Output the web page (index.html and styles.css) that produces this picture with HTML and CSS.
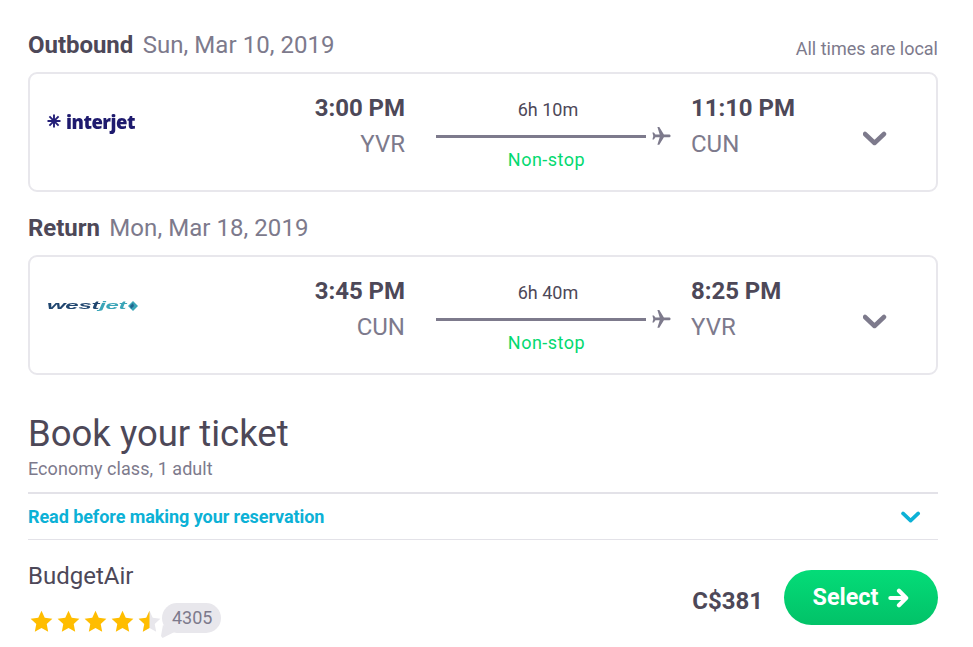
FILE: index.html
```html
<!DOCTYPE html>
<html lang="en">
<head>
<meta charset="utf-8">
<title>Book your ticket</title>
<link rel="stylesheet" href="styles.css">
</head>
<body>
<svg class="defs" width="0" height="0" aria-hidden="true">
  <defs>
    <path id="star" d="M11 0.8l3.1 6.7 7.3.9-5.4 5 1.4 7.3L11 17.1l-6.4 3.6L6 13.4.6 8.4l7.3-.9z"/>
    <g id="plane"><path d="M19.6 9.9c0-.9-.9-1.4-1.8-1.4h-4.9L8.3 1H6.4l2.3 7.5H4.4L2.9 6.4H1.4l.9 3.5-.9 3.5h1.5l1.5-2.1h4.3L6.4 18.8h1.9l4.6-7.5h4.9c.9 0 1.8-.5 1.8-1.4z"/></g>
    <path id="chev" d="M2 3l9.500 9L21 3" fill="none" stroke-width="4.500" stroke-linecap="round" stroke-linejoin="round"/>
  </defs>
</svg>
<main class="page">
  <section class="leg leg-first">
    <header class="leg-head">
      <h2 class="leg-title"><b>Outbound</b><span>Sun, Mar 10, 2019</span></h2>
      <span class="local">All times are local</span>
    </header>
    <article class="card">
      <div class="logo logo-interjet">
        <svg class="burst" viewBox="0 0 14 14"><path d="M7 .5v13M.5 7h13M2.400 2.400l9.200 9.200M11.600 2.400l-9.200 9.200" fill="none" stroke="#241f78" stroke-width="1.900"/></svg>
        <span>interjet</span>
      </div>
      <div class="stop stop-from"><strong>3:00 PM</strong><span>YVR</span></div>
      <div class="route">
        <span class="dur">6h 10m</span>
        <div class="track"><i class="line"></i><svg class="plane" viewBox="0 0 20 20"><use href="#plane"/></svg></div>
        <span class="nonstop">Non-stop</span>
      </div>
      <div class="stop stop-to"><strong>11:10 PM</strong><span>CUN</span></div>
      <svg class="chevron" viewBox="0 0 24 15"><use href="#chev"/></svg>
    </article>
  </section>
  <section class="leg">
    <header class="leg-head">
      <h2 class="leg-title"><b>Return</b><span>Mon, Mar 18, 2019</span></h2>
    </header>
    <article class="card">
      <div class="logo logo-westjet">
        <span class="wordmark"><span class="w1">west</span><span class="w2">jet</span></span>
        <svg class="leaf" viewBox="0 0 12 12"><path d="M6 1l5 5-5 5-5-5z" fill="#3aa5b8"/><path d="M3 6l3-3 1 3-3 3z" fill="#20668f"/></svg>
      </div>
      <div class="stop stop-from"><strong>3:45 PM</strong><span>CUN</span></div>
      <div class="route">
        <span class="dur">6h 40m</span>
        <div class="track"><i class="line"></i><svg class="plane" viewBox="0 0 20 20"><use href="#plane"/></svg></div>
        <span class="nonstop">Non-stop</span>
      </div>
      <div class="stop stop-to"><strong>8:25 PM</strong><span>YVR</span></div>
      <svg class="chevron" viewBox="0 0 24 15"><use href="#chev"/></svg>
    </article>
  </section>
  <section class="book">
    <h1>Book your ticket</h1>
    <p class="sub">Economy class, 1 adult</p>
    <div class="notice">
      <span>Read before making your reservation</span>
      <svg class="notice-chev" viewBox="0 0 24 15"><use href="#chev"/></svg>
    </div>
    <div class="offer">
      <div class="seller">
        <div class="seller-name">BudgetAir</div>
        <div class="rating">
          <svg class="star" viewBox="0 0 22 22"><use href="#star"/></svg>
          <svg class="star" viewBox="0 0 22 22"><use href="#star"/></svg>
          <svg class="star" viewBox="0 0 22 22"><use href="#star"/></svg>
          <svg class="star" viewBox="0 0 22 22"><use href="#star"/></svg>
          <svg class="star star-half" viewBox="0 0 22 22"><use class="star-bg" href="#star"/><path d="M11 .8v16.3l-6.400 3.600L6 13.400.6 8.400l7.300-.9z"/></svg>
          <span class="bubble">4305</span>
        </div>
      </div>
      <div class="buy">
        <span class="price">C$381</span>
        <button class="select" type="button"><span class="select-label">Select</span>
          <svg class="arrow" viewBox="0 0 22 20"><path d="M2.500 10h16M11.500 2.500l7.500 7.500-7.500 7.500" fill="none" stroke="#fff" stroke-width="4.400" stroke-linecap="round" stroke-linejoin="round"/></svg>
        </button>
      </div>
    </div>
  </section>
</main>
</body>
</html>
```
FILE: styles.css
```css
* { box-sizing: border-box; }
html, body { margin: 0; height: 100%; }
body {
  background: #fff;
  font-family: Roboto, "Liberation Sans", sans-serif;
  color: #4d4858;
  overflow: hidden;
}
.defs { position: absolute; }
.page { padding: 0 35px 0 28px; }
.leg-first { padding-top: 30px; }
.leg { margin-bottom: 21px; }
.leg-head {
  display: flex;
  justify-content: space-between;
  align-items: flex-end;
  height: 30px;
  margin-bottom: 12px;
}
.leg-title {
  margin: 0;
  font-size: 24px;
  line-height: 30px;
  font-weight: 400;
  letter-spacing: 0.05px;
  display: flex;
  gap: 9.500px;
  color: #7d7a8c;
}
.leg-title b { color: #4d4858; font-weight: 700; letter-spacing: -0.05px; }
.local { font-size: 18px; line-height: 24px; margin-bottom: -1px; color: #7d7a8c; }
.card {
  height: 120px;
  border: 2px solid #e8e7ec;
  border-radius: 9px;
  display: grid;
  grid-template-columns: 375px 266px 1fr auto;
  align-items: start;
  position: relative;
}
.logo { position: absolute; left: 17px; white-space: nowrap; display: flex; align-items: center; }
.logo-interjet {
  top: 34px;
  height: 26px;
  font-family: "Open Sans", sans-serif;
  font-size: 18.500px;
  font-weight: 800;
  letter-spacing: -0.5px;
  color: #1e1a6e;
  gap: 5px;
  filter: blur(0.35px);
}
.burst { width: 14px; height: 14px; flex: none; }
.logo-westjet {
  top: 41px;
  height: 16px;
  font-family: "Liberation Sans", sans-serif;
  font-size: 24px;
  line-height: 16px;
  font-weight: 700;
  font-style: italic;
  letter-spacing: -0.3px;
  filter: blur(0.5px);
}
.wordmark { display: inline-block; transform: scaleY(0.42); transform-origin: center; }
.w1 { color: #20466f; }
.w2 { color: #3aa5b8; }
.leaf { width: 12px; height: 12px; flex: none; margin-left: 1px; }
.stop { display: flex; flex-direction: column; padding-top: 19px; }
.stop strong { font-size: 24px; line-height: 30px; font-weight: 700; letter-spacing: -0.05px; color: #4d4858; }
.stop span { font-size: 24px; line-height: 30px; margin-top: 6px; color: #7d7a8c; }
.stop-from { grid-column: 1; text-align: right; }
.stop-to { grid-column: 3; padding-left: 20px; }
.route {
  grid-column: 2;
  display: flex;
  flex-direction: column;
  align-items: center;
  padding: 25px 0 0 31px;
}
.dur { font-size: 18px; line-height: 22px; color: #4d4858; padding-right: 11px; }
.track { display: flex; align-items: center; height: 22px; margin-top: 4px; width: 235px; }
.line { display: block; width: 210px; height: 3px; background: #7d7a8c; }
.plane { width: 20px; height: 20px; margin-left: 5px; fill: #7d7a8c; }
.nonstop { font-size: 18px; line-height: 22px; letter-spacing: 0.5px; color: #04d970; margin-top: 2px; padding-right: 14px; }
.chevron {
  grid-column: 4;
  width: 24px;
  height: 15px;
  margin: 57px 49px 0 0;
  stroke: #7d7a8c;
}
.book { padding-top: 16px; }
.book h1 {
  margin: 0;
  font-size: 36.5px;
  line-height: 44px;
  font-weight: 400;
  color: #4d4858;
}
.sub { margin: 2px 0 0; font-size: 18px; line-height: 22px; letter-spacing: 0.05px; color: #7d7a8c; }
.notice {
  margin-top: 12px;
  height: 48px;
  border-top: 2px solid #e3e2e8;
  border-bottom: 1px solid #e3e2e8;
  display: flex;
  align-items: center;
  justify-content: space-between;
  font-size: 18px;
  font-weight: 700;
  letter-spacing: -0.07px;
  color: #0cb1d6;
}
.notice-chev { width: 20px; height: 12px; margin-right: 17px; stroke: #0cb1d6; }
.offer {
  display: flex;
  justify-content: space-between;
  padding-top: 21px;
}
.seller-name { font-size: 24px; line-height: 30px; color: #4d4858; }
.rating { display: flex; align-items: center; margin-top: 14px; height: 32px; padding-left: 2px; position: relative; }
.star { width: 23px; height: 23px; fill: #ffbd00; margin: 1px 4px 0 0; flex: none; }
.star-half { margin-right: 0; }
.star-bg { fill: #e8e7ec; }
.bubble {
  position: relative;
  margin-left: 1px;
  margin-top: -6px;
  height: 30px;
  padding: 0 9px 0 10px;
  border-radius: 15px;
  background: #e8e7ec;
  font-size: 18px;
  line-height: 30px;
  color: #7d7a8c;
}
.bubble::after {
  content: "";
  position: absolute;
  left: -1px;
  bottom: -5px;
  width: 13px;
  height: 13px;
  background: #e8e7ec;
  clip-path: polygon(15% 0, 0 85%, 12% 100%, 100% 55%);
}
.buy { display: flex; align-items: center; gap: 21px; height: 55px; margin-top: 9px; }
.price { font-size: 24px; font-weight: 700; color: #4d4858; padding-top: 6px; }
.select {
  width: 154px;
  height: 55px;
  border: 0;
  border-radius: 28px;
  background: linear-gradient(#04dc78, #02c268);
  color: #fff;
  font-family: inherit;
  font-size: 23.4px;
  font-weight: 700;
  display: flex;
  align-items: center;
  justify-content: center;
  gap: 10px;
  padding: 0;
}
.select-label { margin-top: -2px; }
.arrow { width: 21px; height: 20px; }
```
